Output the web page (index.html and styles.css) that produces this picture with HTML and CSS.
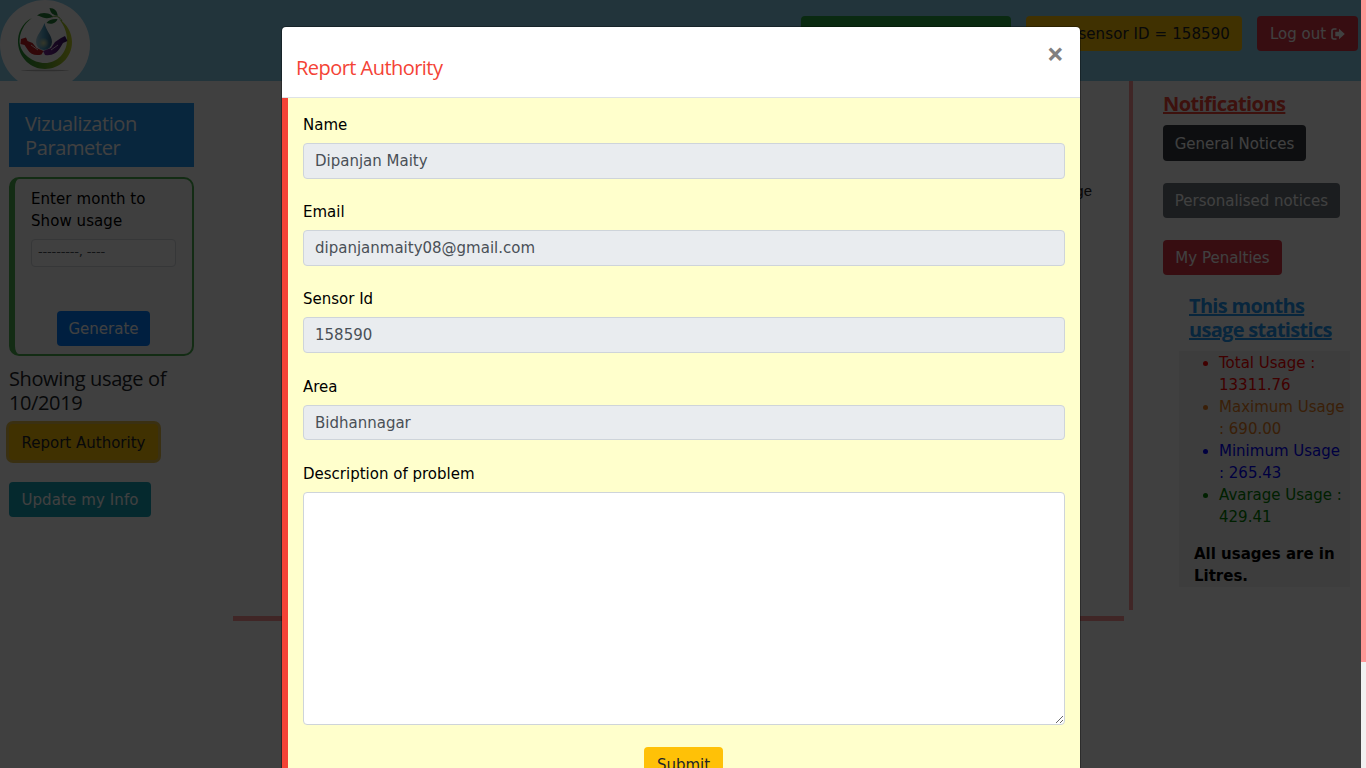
FILE: index.html
```html
<!DOCTYPE html>
<html lang="en">
<head>
<meta charset="utf-8">
<title>Water usage</title>
<link rel="stylesheet" href="styles.css">
</head>
<body>
<div class="page">
  <header class="topbar">
    <svg class="logo" viewBox="0 0 90 90" width="90" height="90">
      <defs>
        <linearGradient id="ring" x1="0" x2="1"><stop offset="0" stop-color="#1f8f35"/><stop offset=".5" stop-color="#62a62c"/><stop offset="1" stop-color="#c5d22a"/></linearGradient>
        <linearGradient id="drop" x1="0" x2="1"><stop offset="0" stop-color="#a9cfe0"/><stop offset=".5" stop-color="#4d9fc4"/><stop offset="1" stop-color="#36627f"/></linearGradient>
        <radialGradient id="glow"><stop offset="0" stop-color="#d8dca0"/><stop offset="1" stop-color="#d8dca0" stop-opacity="0"/></radialGradient>
        <linearGradient id="hand" x1="0" x2="1"><stop offset="0" stop-color="#7d2a98"/><stop offset="1" stop-color="#351064"/></linearGradient>
      </defs>
      <circle cx="45" cy="45" r="45" fill="#fff"/>
      <path d="M32 18C22 23 17.500 33 18 43c1 15 13 26 27 26s27-11 27-27c0-9-5-18-13-23 5 6 8 13 8 21 0 13-10 23-22 23S20.500 54 19.500 42c0-9 4-18 12.500-24z" fill="url(#ring)"/>
      <path d="M37 15.500c3-3 8-3 11-2 2 .5 4 2 5 3-2 1.500-5 2-8 1.500-3-.5-5-2-8-2.500z" fill="#26813b"/>
      <path d="M49.500 8c5 0 8 3 8.200 8-4-1-7-2-8.200-8zM46.500 23c2-3 6-4.500 11-4-1 4-6 6-11 4z" fill="#26813b"/>
      <path d="M52 17c4-2 8 0 10 4" fill="none" stroke="#6ca936" stroke-width="1"/>
      <path d="M44.500 23C42 31 36 35 36 42a8 8 0 0 0 16 0c0-7-6-11-7.500-19z" fill="url(#drop)"/>
      <circle cx="43.500" cy="43" r="5.500" fill="url(#glow)"/>
      <path d="M21 39l5-1.500 1.500 3.500 5 2 4 5 7 3-2 3.500c-6 1.500-11 0-14-5l-3-4.500-4-1z" fill="#c31d22"/>
      <path d="M67.500 41l-2.500-5-4 2-6 4-4 6-8 3 2 4c7 1 12-2 15-7l3-5z" fill="url(#hand)"/>
      <path d="M31 45l7 5M58 45l-7 5" stroke="#fff" stroke-width=".8"/>
      <ellipse cx="45" cy="70.500" rx="24" ry=".7" fill="#bbb"/>
    </svg>
    <nav class="actions">
      <a class="btn green name-btn">Dipanjan Maity</a>
      <a class="btn yellow sensor-btn">sensor ID = 158590</a>
      <a class="btn red logout-btn">Log out <svg width="14" height="12" viewBox="0 0 14 12"><path d="M5.500 1H2.800A1.800 1.800 0 0 0 1 2.800v6.400A1.800 1.800 0 0 0 2.800 11h2.700" fill="none" stroke="#fff" stroke-width="1.700"/><path d="M4.300 3.800H8V.8L13.800 6 8 11.200v-3H4.300z" fill="#fff"/></svg></a>
    </nav>
  </header>
  <div class="columns">
    <aside class="left">
      <h4 class="param-title">Vizualization<br>Parameter</h4>
      <form class="month-form">
        <label class="month-label">Enter month to<br>Show usage</label>
        <div class="month-input">---------, ----</div>
        <a class="btn blue generate-btn">Generate</a>
      </form>
      <h4 class="showing">Showing usage of<br>10/2019</h4>
      <a class="btn yellow report-btn">Report Authority</a>
      <a class="btn teal update-btn">Update my Info</a>
    </aside>
    <main class="chart"><span class="legend">Usage</span></main>
    <aside class="right">
      <h4 class="notif">Notifications</h4>
      <a class="btn dark general-btn">General Notices</a>
      <a class="btn gray personal-btn">Personalised notices</a>
      <a class="btn red penalty-btn">My Penalties</a>
      <h4 class="stats-title">This months<br>usage statistics</h4>
      <section class="stats">
        <ul>
          <li class="total">Total Usage :<br>13311.76</li>
          <li class="max">Maximum Usage<br>: 690.00</li>
          <li class="min">Minimum Usage<br>: 265.43</li>
          <li class="avg">Avarage Usage :<br>429.41</li>
        </ul>
        <b>All usages are in<br>Litres.</b>
      </section>
    </aside>
  </div>
</div>
<div class="scrollbar"><div class="thumb"></div></div>
<div class="backdrop">
  <div class="modal">
    <div class="modal-header"><h4>Report Authority</h4><span class="close">×</span></div>
    <form class="modal-body">
      <div class="field"><label>Name</label><div class="control">Dipanjan Maity</div></div>
      <div class="field"><label>Email</label><div class="control">dipanjanmaity08@gmail.com</div></div>
      <div class="field"><label>Sensor Id</label><div class="control">158590</div></div>
      <div class="field"><label>Area</label><div class="control">Bidhannagar</div></div>
      <div class="field"><label>Description of problem</label><textarea></textarea></div>
      <a class="btn yellow submit-btn">Submit</a>
    </form>
  </div>
</div>
</body>
</html>
```
FILE: styles.css
```css
* { box-sizing: border-box; }
html, body { margin: 0; height: 768px; overflow: hidden; }
body { display: flex; font: 15px/22px Verdana, "DejaVu Sans", sans-serif; color: #000; background: #fff; }
h4 { margin: 0; font: 400 20px/24px "Segoe UI", "Open Sans", sans-serif; letter-spacing: -.38px; }
.page { width: 1361px; height: 768px; }
.btn { display: flex; align-items: center; justify-content: center; height: 35px; border-radius: 4px; color: #fff; white-space: nowrap; }
.green { background: #28a745; }
.yellow { background: #ffc107; color: #212529; }
.red { background: #dc3545; }
.blue { background: #007bff; }
.teal { background: #17a2b8; }
.dark { background: #343a40; }
.gray { background: #6c757d; }

.topbar { display: flex; justify-content: space-between; height: 81px; background: #87ceeb; overflow: hidden; }
.actions { display: flex; gap: 15px; padding: 16px 3px 0 0; }
.name-btn { width: 210px; }
.sensor-btn { width: 216px; justify-content: flex-end; padding-right: 12px; letter-spacing: .1px; }
.logout-btn { width: 101px; gap: 5px; }

.columns { display: grid; grid-template-columns: 233px 891px 232px; column-gap: 0; }
.left { padding: 22px 39px 0 9px; }
.param-title { height: 64px; padding: 9px 16px; background: #2196f3; color: #fff; }
.month-form { height: 179px; margin-top: 10px; padding: 9px 16px; border: 2px solid #4caf50; border-left-width: 6px; border-radius: 10px; background: #f9f9f9; }
.month-label { display: block; height: 44px; letter-spacing: .07px; }
.month-input { width: 145px; height: 28px; margin-top: 7px; padding: 0 6px; border: 1px solid #d5dadf; border-radius: 4px; background: #fff; color: #495057; font-size: 13px; line-height: 24px; letter-spacing: -.15px; }
.generate-btn { width: 93px; margin: 44px 0 0 26px; padding-top: 1px; }
.showing { margin-top: 11px; color: #212529; }
.report-btn { width: 149px; height: 36px; margin-top: 9px; padding-top: 1px; box-shadow: 0 0 0 3px rgba(222, 170, 12, .75); }
.update-btn { width: 142px; margin-top: 22px; letter-spacing: .1px; }

.chart { height: 540px; padding: 99px 32px 0 0; border-bottom: 5px solid #f99; text-align: right; }
.legend { font: 15px/22px "Liberation Sans", sans-serif; color: #222; }

.right { height: 529px; margin-left: 5px; padding: 11px 11px 0 30px; border-left: 4px solid #f99; }
.notif { height: 24px; color: #f44336; font-weight: 700; text-decoration: underline; letter-spacing: -.58px; }
.general-btn { width: 143px; height: 36px; margin-top: 9px; padding-top: 1px; }
.personal-btn { width: 177px; margin-top: 22px; }
.penalty-btn { width: 119px; margin-top: 22px; }
.stats-title { margin: 19px 0 0 26px; color: #2196f3; font-weight: 700; text-decoration: underline; white-space: nowrap; letter-spacing: -.7px; }
.stats { width: 171px; height: 236px; margin: 9px 0 0 16px; padding: 1px 0 0 15px; background: #f1f1f1; white-space: nowrap; }
.stats ul { margin: 0 0 15px; padding: 0 0 0 25px; }
.total { color: red; }
.max { color: #e67e22; }
.min { color: blue; }
.avg { color: green; }

.scrollbar { width: 5px; height: 768px; background: #f1f1f1; }
.thumb { height: 662px; background: #f99; }

.backdrop { position: absolute; left: 0; top: 0; width: 1361px; height: 768px; background: rgba(0, 0, 0, .75); overflow: hidden; }
.modal { width: 798px; margin: 27px auto 0 282px; border-radius: 4px; background: #fff; box-shadow: 0 0 0 1px rgba(0, 0, 0, .3); overflow: hidden; }
.modal-header { display: flex; justify-content: space-between; height: 71px; padding: 29px 16px 0 14px; border-bottom: 1px solid #dee2e6; color: #f44336; }
.modal-header h4 { letter-spacing: -.54px; }
.close { margin-top: -14px; font: 700 30px/24px "Open Sans", sans-serif; color: #808080; }
.modal-body { height: 720px; padding: 16px 15px; border-left: 6px solid #f44336; background: #ffc; }
.field { height: 87.2px; }
.field label { display: block; height: 22px; line-height: 23px; }
.control { height: 35.8px; margin-top: 7px; padding: 0 11px; border: 1px solid #ced4da; border-radius: 4px; background: #e9ecef; color: #495057; line-height: 35.4px; }
.field textarea { display: block; width: 762px; height: 233px; margin-top: 7px; border: 1px solid #ced4da; border-radius: 4px; background: #fff; }
.submit-btn { width: 79px; margin: 197px 0 0 341px; padding-top: 2px; }
```
